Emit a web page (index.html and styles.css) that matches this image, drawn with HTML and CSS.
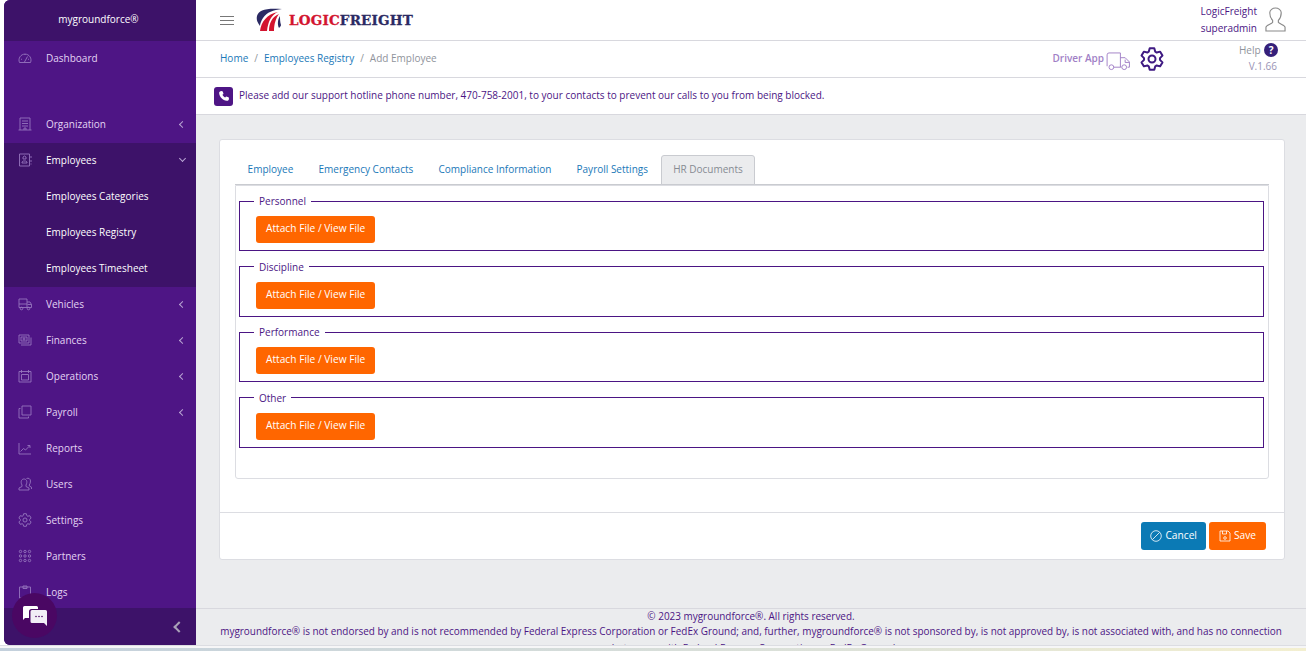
FILE: index.html
```html
<!DOCTYPE html>
<html lang="en">
<head>
    <meta charset="UTF-8">
    <meta name="viewport" content="width=device-width, initial-scale=1.0">
    <title>Add Employee</title>
    <link rel="stylesheet" href="styles.css">
</head>
<body>
    <div class="app">
        <!-- Sidebar -->
        <aside class="sidebar">
            <div class="brand">mygroundforce®</div>
            <nav class="menu">
                <a class="menu-item">
                    <svg class="menu-icon" viewBox="0 0 14 14"><path d="M1.500 11.500a6 6 0 1 1 11 0zM6.500 11l3-5.500M3 8l1 .5M11 8l-1 .5M7 3v1"/></svg>
                    <span>Dashboard</span>
                </a>
                <div class="menu-gap"></div>
                <a class="menu-item">
                    <svg class="menu-icon" viewBox="0 0 14 14"><path d="M2 13V1h10v12M0.500 13h13M4 4h6M4 6.500h6M4 9h6M6 13v-2h2v2"/></svg>
                    <span>Organization</span><i class="caret"></i>
                </a>
                <div class="menu-open">
                    <a class="menu-item active">
                        <svg class="menu-icon" viewBox="0 0 14 14"><path d="M1.500 1h10v12h-10zM13 3v2M13 7v2M13 10.500v1M4 10V9l1.500-1h2l1.500 1v1zM5 6V4l1.500-1L8 4v2z"/></svg>
                        <span>Employees</span><i class="caret down"></i>
                    </a>
                    <a class="menu-item sub">Employees Categories</a>
                    <a class="menu-item sub">Employees Registry</a>
                    <a class="menu-item sub">Employees Timesheet</a>
                </div>
                <a class="menu-item">
                    <svg class="menu-icon" viewBox="0 0 14 14"><path d="M1 2h8v8.500H1zM9 5h3l1.500 2.500v3H9M1 7h8M9.500 7.500h4"/><circle cx="3.500" cy="11.500" r="1.300"/><circle cx="10.500" cy="11.500" r="1.300"/></svg>
                    <span>Vehicles</span><i class="caret"></i>
                </a>
                <a class="menu-item">
                    <svg class="menu-icon" viewBox="0 0 14 14"><path d="M1 2h10v8H1zM13 4.500V12H3M3 4h6v4H3z"/><circle cx="6" cy="6" r="1"/></svg>
                    <span>Finances</span><i class="caret"></i>
                </a>
                <a class="menu-item">
                    <svg class="menu-icon" viewBox="0 0 14 14"><path d="M1 2.500h12V13H1zM3.500 1v3M10.500 1v3M3.500 5.500h7v5.500h-7z"/></svg>
                    <span>Operations</span><i class="caret"></i>
                </a>
                <a class="menu-item">
                    <svg class="menu-icon" viewBox="0 0 14 14"><path d="M4 1h9v9H4zM2.500 3.500H1V13h9.500v-1.500"/></svg>
                    <span>Payroll</span><i class="caret"></i>
                </a>
                <a class="menu-item">
                    <svg class="menu-icon" viewBox="0 0 14 14"><path d="M1 2v11h12M2.500 10.500l3-3 2 1.500 4-4M9.500 4.500h2.500V7"/></svg>
                    <span>Reports</span>
                </a>
                <a class="menu-item">
                    <svg class="menu-icon" viewBox="0 0 14 14"><path d="M1 13v-2l3-1.500V8C3 6.500 3 4.500 3.500 3.500 4.500 1.500 7.500 1.500 8.500 3.500 9 4.500 9 6.500 8 8v1.500l3 1.500v2zM8.500 1.500c2-1 4 .5 4 2.500 0 1.500-.5 3-1.200 4v1l2.200 1.200V12"/></svg>
                    <span>Users</span>
                </a>
                <a class="menu-item">
                    <svg class="menu-icon gear-small" viewBox="0 0 24 24"><use href="#gear"/></svg>
                    <span>Settings</span>
                </a>
                <a class="menu-item">
                    <svg class="menu-icon" viewBox="0 0 14 14"><circle cx="2.500" cy="2.500" r="1.200"/><circle cx="7" cy="2.500" r="1.200"/><circle cx="11.500" cy="2.500" r="1.200"/><circle cx="2.500" cy="7" r="1.200"/><circle cx="7" cy="7" r="1.200"/><circle cx="11.500" cy="7" r="1.200"/><circle cx="2.500" cy="11.500" r="1.200"/><circle cx="7" cy="11.500" r="1.200"/><circle cx="11.500" cy="11.500" r="1.200"/></svg>
                    <span>Partners</span>
                </a>
                <a class="menu-item">
                    <svg class="menu-icon" viewBox="0 0 14 14"><path d="M1.500 2h11v11h-11zM5 1h4v2.500H5z"/></svg>
                    <span>Logs</span>
                </a>
            </nav>
            <div class="sidebar-foot"><i class="collapse"></i></div>
            <div class="chat-bubble">
                <svg viewBox="0 0 24 20" width="24" height="20">
                    <path class="chat-back" d="M1.500 0h12a1.500 1.500 0 0 1 1.500 1.500V3H8.500A2.500 2.500 0 0 0 6 5.500V12H2l-2 2V1.500A1.500 1.500 0 0 1 1.500 0z"/>
                    <path class="chat-front" d="M9 4h13.500A1.500 1.500 0 0 1 24 5.500V20l-3-3H9a1.500 1.500 0 0 1-1.500-1.500v-10A1.500 1.500 0 0 1 9 4z"/>
                    <circle class="chat-dot" cx="13" cy="10.500" r=".8"/><circle class="chat-dot" cx="16" cy="10.500" r=".8"/><circle class="chat-dot" cx="19" cy="10.500" r=".8"/>
                </svg>
            </div>
        </aside>

        <div class="main">
            <header class="topbar">
                <div class="burger"><span></span><span></span><span></span></div>
                <div class="logo">
                    <svg viewBox="0 0 26 24" width="26" height="24">
                        <path fill="#2b2a63" d="M1 8C3 2 9 0 26 1c-9 1-15 3-19 9-2 3-3 6-3 8C2 15 0 12 1 8z"/>
                        <path fill="#d3142f" d="M4 23C5 14 11 6 22 4c-7 3-10 10-11 19zM13 23c0-8 3-14 10-17-3 4-5 10-5 17z"/>
                        <path fill="#2b2a63" d="M24 8c-2 3-3 8-1 12 1-1 2-2 2-3-1-3-1-6-1-9z"/>
                    </svg>
                    <span class="logo-text"><em>LOGIC</em>FREIGHT</span>
                </div>
                <div class="user">
                    <div class="user-names"><span>LogicFreight</span><span>superadmin</span></div>
                    <svg class="user-icon" viewBox="0 0 22 26" width="21" height="25"><path d="M1 25v-4c0-2 5-3 7-5v-2c-2-2-3-5-3-8 0-3 3-5 6-5s6 2 6 5c0 3-1 6-3 8v2c2 2 7 3 7 5v4z"/></svg>
                </div>
            </header>

            <div class="crumbbar">
                <div class="crumbs"><a>Home</a><i>/</i><a>Employees Registry</a><i>/</i><span>Add Employee</span></div>
                <div class="driver-app">
                    <span>Driver App</span>
                    <svg viewBox="0 0 26 20" width="25" height="19"><path d="M1 15V3a2 2 0 0 1 2-2h12v15H8M15 6h5l4.500 4.500V16h-2M15 16h1M20 8v3h4"/><circle cx="5.500" cy="16" r="2.500"/><circle cx="19" cy="16" r="2.500"/></svg>
                </div>
                <svg class="gear" viewBox="0 0 24 24" width="24" height="24"><use href="#gear"/></svg>
                <div class="help">
                    <div class="help-line">Help <b>?</b></div>
                    <div class="version">V.1.66</div>
                </div>
            </div>

            <div class="notice">
                <span class="phone">
                    <svg viewBox="0 0 24 24" width="12" height="12"><path d="M6.600 2l3 .8 1.400 5-2.200 1.900c1 2.200 3.200 4.500 5.500 5.500l1.900-2.200 5 1.400.8 3c0 2.500-2 4.600-4.500 4.300C9.500 20.700 3.300 14.500 2.300 6.500 2 4 4.100 2 6.600 2z"/></svg>
                </span>
                <span class="notice-text">Please add our support hotline phone number, 470-758-2001, to your contacts to prevent our calls to you from being blocked.</span>
            </div>

            <main class="content">
                <section class="card">
                    <div class="card-body">
                        <ul class="tabs">
                            <li>Employee</li>
                            <li>Emergency Contacts</li>
                            <li>Compliance Information</li>
                            <li>Payroll Settings</li>
                            <li class="current">HR Documents</li>
                        </ul>
                        <div class="tab-pane">
                            <fieldset class="doc-group">
                                <legend>Personnel</legend>
                                <button class="btn orange"><span>Attach File / View File</span></button>
                            </fieldset>
                            <fieldset class="doc-group">
                                <legend>Discipline</legend>
                                <button class="btn orange"><span>Attach File / View File</span></button>
                            </fieldset>
                            <fieldset class="doc-group">
                                <legend>Performance</legend>
                                <button class="btn orange"><span>Attach File / View File</span></button>
                            </fieldset>
                            <fieldset class="doc-group">
                                <legend>Other</legend>
                                <button class="btn orange"><span>Attach File / View File</span></button>
                            </fieldset>
                        </div>
                    </div>
                    <div class="card-foot">
                        <button class="btn blue">
                            <svg viewBox="0 0 12 12" width="12" height="12"><circle cx="6" cy="6" r="5.300"/><path d="M2.500 9.500l7-7"/></svg>
                            <span>Cancel</span>
                        </button>
                        <button class="btn orange">
                            <svg viewBox="0 0 12 12" width="12" height="12"><path d="M1 1h8l2 2v8H1zM3.500 1v3h4V1"/><circle cx="6" cy="8" r="1.300"/></svg>
                            <span>Save</span>
                        </button>
                    </div>
                </section>
            </main>

            <footer class="footer">
                <p>© 2023 mygroundforce®. All rights reserved.</p>
                <p class="disclaimer">mygroundforce® is not endorsed by and is not recommended by Federal Express Corporation or FedEx Ground; and, further, mygroundforce® is not sponsored by, is not approved by, is not associated with, and has no connection whatsoever with Federal Express Corporation or FedEx Ground.</p>
            </footer>
        </div>
    </div>
    <div class="window-edge"></div>

    <svg class="defs" width="0" height="0">
        <symbol id="gear" viewBox="0 0 24 24">
            <path stroke-linejoin="round" d="M15.250 4.690L14.290 1.240H9.710L8.750 4.690L7.300 5.530L3.830 4.640L1.540 8.600L4.040 11.160V12.840L1.540 15.400L3.830 19.360L7.300 18.470L8.750 19.310L9.710 22.760H14.290L15.250 19.310L16.700 18.470L20.170 19.360L22.460 15.400L19.960 12.840V11.160L22.460 8.600L20.170 4.640L16.700 5.530z"/>
            <circle cx="12" cy="12" r="3.500"/>
        </symbol>
    </svg>
</body>
</html>
```

FILE: styles.css
```css
* {
    box-sizing: border-box;
}

html, body {
    height: 100%;
}

body {
    margin: 0;
    overflow: hidden;
    background: #fff;
    font-family: "Open Sans", "Noto Sans", sans-serif;
    font-size: 10px;
    color: #4b1584;
}

.defs {
    position: absolute;
}

.app {
    display: flex;
    height: 645px;
    padding-left: 4px;
}

.window-edge {
    height: 6px;
    border-top: 1px solid #dcdde2;
    background: linear-gradient(90deg, #c3d0dc, #dfe3d8 70%, #f3efd0) bottom / 100% 3px no-repeat, #f6f6f7;
}

/* Sidebar */
.sidebar {
    position: relative;
    width: 192px;
    flex-shrink: 0;
    display: flex;
    flex-direction: column;
    background: #4e1585;
    border-radius: 6px 0 0 6px;
}

.brand {
    height: 41px;
    line-height: 38px;
    text-align: center;
    color: #fff;
    background: #3d1269;
    padding-right: 3px;
    border-radius: 6px 0 0 0;
}

.menu {
    flex: 1;
    overflow: hidden;
}

.menu-gap {
    height: 30px;
}

.menu-item {
    display: flex;
    align-items: center;
    height: 36px;
    padding: 0 0 2px 14px;
    color: #e3d4f3;
    position: relative;
}

.menu-item span {
    margin-left: 14px;
}

.menu-item.active span,
.menu-item.sub {
    color: #fff;
}

.menu-item.sub {
    padding-left: 42px;
}

.menu-open {
    background: #3d1269;
}

.menu-icon {
    width: 14px;
    height: 14px;
    fill: none;
    stroke: #9575bd;
    stroke-width: .9;
}

.gear-small {
    stroke-width: 1.600;
}

.caret {
    position: absolute;
    right: 11px;
    top: 15px;
    width: 5px;
    height: 5px;
    border-left: 1px solid #b9a5d3;
    border-bottom: 1px solid #b9a5d3;
    transform: rotate(45deg);
}

.caret.down {
    transform: rotate(-45deg);
    top: 13px;
}

.sidebar-foot {
    height: 37px;
    background: #3d1269;
    display: flex;
    align-items: center;
    justify-content: flex-end;
    padding-right: 13px;
    border-radius: 0 0 0 6px;
}

.collapse {
    width: 8px;
    height: 8px;
    border-left: 2px solid #a9a2b8;
    border-bottom: 2px solid #a9a2b8;
    transform: rotate(45deg);
}

.chat-bubble {
    position: absolute;
    left: 8px;
    top: 593px;
    width: 45px;
    height: 45px;
    border-radius: 50%;
    background: #4a0763;
    display: flex;
    align-items: center;
    justify-content: center;
}

.chat-back {
    fill: #fff;
}

.chat-front {
    fill: #f2eef6;
}

.chat-dot {
    fill: #4a0763;
}

/* Main column */
.main {
    flex: 1;
    min-width: 0;
    display: flex;
    flex-direction: column;
    background: #ebecee;
}

.topbar {
    height: 41px;
    flex-shrink: 0;
    display: flex;
    align-items: center;
    background: #fff;
    border-bottom: 1px solid #d8d8de;
    padding: 0 20px 0 24px;
}

.burger {
    width: 14px;
}

.burger span {
    display: block;
    height: 1px;
    margin: 3px 0;
    background: #777;
}

.logo {
    display: flex;
    align-items: center;
    margin-left: 22px;
}

.logo-text {
    margin-left: 7px;
    font-family: "DejaVu Serif", serif;
    font-size: 13.500px;
    font-weight: bold;
    letter-spacing: .2px;
    -webkit-text-stroke: .3px currentColor;
    color: #2b2a63;
}

.logo-text em {
    font-style: normal;
    color: #d3142f;
}

.user {
    margin-left: auto;
    display: flex;
    align-items: center;
}

.user-names {
    display: flex;
    flex-direction: column;
    align-items: flex-end;
    gap: 3px;
    margin-top: -2px;
}

.user-icon {
    margin-left: 8px;
    margin-top: -1px;
    fill: none;
    stroke: #8a8a8a;
    stroke-width: 1.200;
}

.crumbbar {
    height: 37px;
    flex-shrink: 0;
    display: flex;
    align-items: center;
    background: #fff;
    border-bottom: 1px solid #d8d8de;
    padding: 0 29px 0 24px;
}

.crumbs {
    margin-top: -2px;
}

.crumbs a {
    color: #1a78b8;
}

.crumbs i {
    font-style: normal;
    margin: 0 6px;
    color: #8f939b;
}

.crumbs span {
    color: #8f939b;
}

.driver-app {
    margin-left: auto;
    display: flex;
    align-items: center;
    gap: 2px;
    font-weight: 600;
    color: #a17fc6;
}

.driver-app span {
    margin-top: -2px;
}

.driver-app svg {
    fill: none;
    stroke: #a17fc6;
    stroke-width: 1;
    margin-top: 5px;
}

.gear {
    margin-left: 9px;
    fill: none;
    stroke: #3f1a82;
    stroke-width: 2;
}

.help {
    width: 38px;
    margin-left: 75px;
    margin-top: -2px;
    text-align: right;
    color: #8f939b;
}

.help-line {
    white-space: nowrap;
}

.help-line b {
    display: inline-block;
    width: 14px;
    height: 14px;
    line-height: 14px;
    margin-left: 1px;
    border-radius: 50%;
    text-align: center;
    color: #fff;
    background: #35207a;
}

.version {
    margin-top: 2px;
    color: #9a94b5;
}

.notice {
    height: 37px;
    flex-shrink: 0;
    display: flex;
    align-items: center;
    gap: 6px;
    background: #fff;
    border-bottom: 1px solid #d8d8de;
    padding: 0 0 0 18px;
}

.notice-text {
    margin-top: -2px;
}

.phone {
    width: 19px;
    height: 19px;
    border-radius: 3px;
    background: #4e1585;
    display: flex;
    align-items: center;
    justify-content: center;
}

.phone svg {
    fill: #fff;
}

.content {
    flex: 1;
    padding: 24px 21px 0 23px;
    min-height: 0;
}

.card {
    height: 421px;
    background: #fff;
    border: 1px solid #dcdde2;
    border-radius: 3px;
    display: flex;
    flex-direction: column;
}

.card-body {
    flex: 1;
    padding: 15px 15px 33px;
    display: flex;
    flex-direction: column;
}

.tabs {
    list-style: none;
    display: flex;
    margin: 0;
    padding: 0;
    height: 30px;
    border-bottom: 1px solid #c9cbd0;
}

.tabs li {
    height: 30px;
    line-height: 26px;
    padding: 0 11.600px;
    color: #1a78b8;
    border: 1px solid transparent;
    border-radius: 3px 3px 0 0;
}

.tabs li.current {
    color: #868b93;
    background: #ebecee;
    border-color: #c9cbd0;
}

.tab-pane {
    flex: 1;
    border: 1px solid #dcdde2;
    border-radius: 0 0 3px 3px;
    padding: 8px 4px 0 3px;
}

.doc-group {
    margin: 0 0 8.500px;
    padding: 8px 0 0 16px;
    height: 57px;
    border: 1px solid #4b1584;
}

.doc-group legend {
    padding: 0 5px;
    margin-left: -2px;
    line-height: 14px;
    height: 14px;
}

.btn {
    display: inline-flex;
    align-items: center;
    gap: 3px;
    height: 27px;
    padding: 0 10px;
    border: none;
    border-radius: 3px;
    font-family: inherit;
    font-size: 10.200px;
    color: #fff;
}

.btn span {
    margin-top: -3px;
}

.btn.orange {
    background: #ff6600;
}

.btn.blue {
    background: #0b7ab5;
    padding: 0 9px;
}

.btn svg {
    fill: none;
    stroke: #fff;
    stroke-width: .8;
}

.card-foot {
    height: 47px;
    flex-shrink: 0;
    display: flex;
    justify-content: flex-end;
    gap: 3px;
    padding: 9px 18px 0 0;
    border-top: 1px solid #dcdde2;
}

.card-foot .btn {
    height: 28px;
}

.footer {
    height: 37px;
    flex-shrink: 0;
    overflow: hidden;
    text-align: center;
    border-top: 1px solid #d8d8de;
    padding: 0 20px;
    font-size: 9.950px;
    line-height: 15px;
}

.footer p {
    margin: 0;
}

.footer .disclaimer {
    margin-top: -1.500px;
    line-height: 17px;
}
```
